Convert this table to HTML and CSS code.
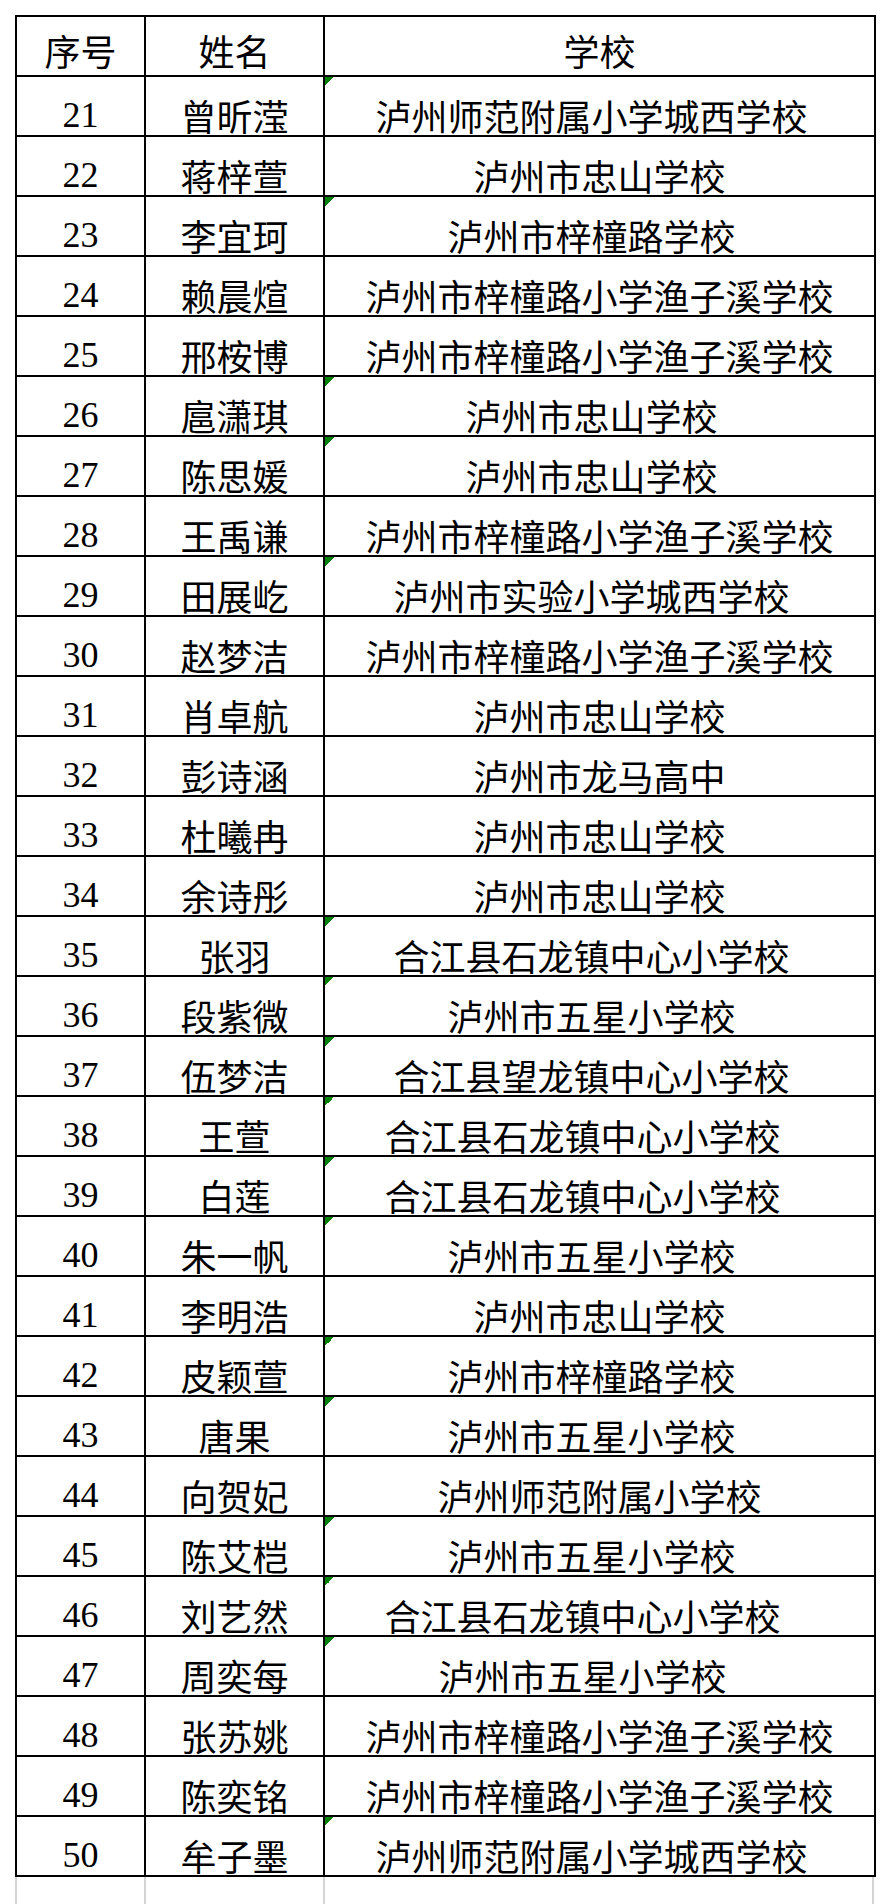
FILE: index.html
```html
<!DOCTYPE html>
<html lang="zh-CN">
<head>
<meta charset="utf-8">
<title>名单</title>
<link rel="stylesheet" href="styles.css">
</head>
<body>
<div class="sheet">
<table class="roster">
<colgroup><col class="c-no"><col class="c-name"><col class="c-school"></colgroup>
<thead>
<tr><th>序号</th><th>姓名</th><th>学校</th></tr>
</thead>
<tbody>
<tr><td class="no">21</td><td>曾昕滢</td><td class="school mark sp1">泸州师范附属小学城西学校</td></tr>
<tr><td class="no">22</td><td>蒋梓萱</td><td class="school">泸州市忠山学校</td></tr>
<tr><td class="no">23</td><td>李宜珂</td><td class="school mark sp1">泸州市梓橦路学校</td></tr>
<tr><td class="no">24</td><td>赖晨煊</td><td class="school">泸州市梓橦路小学渔子溪学校</td></tr>
<tr><td class="no">25</td><td>邢桉博</td><td class="school">泸州市梓橦路小学渔子溪学校</td></tr>
<tr><td class="no">26</td><td>扈潇琪</td><td class="school mark sp1">泸州市忠山学校</td></tr>
<tr><td class="no">27</td><td>陈思媛</td><td class="school mark sp1">泸州市忠山学校</td></tr>
<tr><td class="no">28</td><td>王禹谦</td><td class="school">泸州市梓橦路小学渔子溪学校</td></tr>
<tr><td class="no">29</td><td>田展屹</td><td class="school mark sp1">泸州市实验小学城西学校</td></tr>
<tr><td class="no">30</td><td>赵梦洁</td><td class="school">泸州市梓橦路小学渔子溪学校</td></tr>
<tr><td class="no">31</td><td>肖卓航</td><td class="school">泸州市忠山学校</td></tr>
<tr><td class="no">32</td><td>彭诗涵</td><td class="school">泸州市龙马高中</td></tr>
<tr><td class="no">33</td><td>杜曦冉</td><td class="school">泸州市忠山学校</td></tr>
<tr><td class="no">34</td><td>余诗彤</td><td class="school">泸州市忠山学校</td></tr>
<tr><td class="no">35</td><td>张羽</td><td class="school mark sp1">合江县石龙镇中心小学校</td></tr>
<tr><td class="no">36</td><td>段紫微</td><td class="school mark sp1">泸州市五星小学校</td></tr>
<tr><td class="no">37</td><td>伍梦洁</td><td class="school mark sp1">合江县望龙镇中心小学校</td></tr>
<tr><td class="no">38</td><td>王萱</td><td class="school mark sp2">合江县石龙镇中心小学校</td></tr>
<tr><td class="no">39</td><td>白莲</td><td class="school mark sp2">合江县石龙镇中心小学校</td></tr>
<tr><td class="no">40</td><td>朱一帆</td><td class="school mark sp1">泸州市五星小学校</td></tr>
<tr><td class="no">41</td><td>李明浩</td><td class="school">泸州市忠山学校</td></tr>
<tr><td class="no">42</td><td>皮颖萱</td><td class="school mark sp1">泸州市梓橦路学校</td></tr>
<tr><td class="no">43</td><td>唐果</td><td class="school mark sp1">泸州市五星小学校</td></tr>
<tr><td class="no">44</td><td>向贺妃</td><td class="school">泸州师范附属小学校</td></tr>
<tr><td class="no">45</td><td>陈艾桤</td><td class="school mark sp1">泸州市五星小学校</td></tr>
<tr><td class="no">46</td><td>刘艺然</td><td class="school mark sp2">合江县石龙镇中心小学校</td></tr>
<tr><td class="no">47</td><td>周奕每</td><td class="school mark sp2">泸州市五星小学校</td></tr>
<tr><td class="no">48</td><td>张苏姚</td><td class="school">泸州市梓橦路小学渔子溪学校</td></tr>
<tr><td class="no">49</td><td>陈奕铭</td><td class="school">泸州市梓橦路小学渔子溪学校</td></tr>
<tr><td class="no">50</td><td>牟子墨</td><td class="school mark sp1">泸州师范附属小学城西学校</td></tr>
</tbody>
</table>
<div class="grid-tail"><span></span><span></span><span></span></div>
</div>
</body>
</html>
```

FILE: styles.css
```css
html, body {
  margin: 0;
  padding: 0;
  background: #ffffff;
}

.sheet {
  padding: 15px 0 0 15px;
}

.roster {
  border-collapse: collapse;
  table-layout: fixed;
  width: 859px;
  border: 2px solid #000;
  color: #000;
  font-family: "Noto Sans CJK SC", "Noto Sans", sans-serif;
  font-size: 36px;
}

.c-no { width: 129px; }
.c-name { width: 179px; }
.c-school { width: 551px; }

.roster tr {
  height: 60px;
}

.roster th,
.roster td {
  border: 2px solid #000;
  padding: 0 0 2px 0;
  line-height: 36px;
  text-align: center;
  vertical-align: bottom;
  white-space: nowrap;
  font-weight: 400;
}

.roster th {
  padding-bottom: 7px;
}

.roster td.no {
  font-family: "Liberation Serif", "Times New Roman", serif;
}

.roster td.school {
  position: relative;
}

.roster td.sp1 { padding-right: 16px; }
.roster td.sp2 { padding-right: 34px; }

.roster td.mark::before {
  content: "";
  position: absolute;
  left: 0;
  top: 0;
  width: 9px;
  height: 9px;
  background: linear-gradient(to bottom right, #008000 50%, transparent 50%);
}

.grid-tail {
  display: grid;
  grid-template-columns: 129px 179px 551px;
  width: 859px;
  height: 40px;
}

.grid-tail span {
  border-left: 2px solid #d4d4d4;
}

.grid-tail span:last-child {
  border-right: 2px solid #d4d4d4;
}
```
